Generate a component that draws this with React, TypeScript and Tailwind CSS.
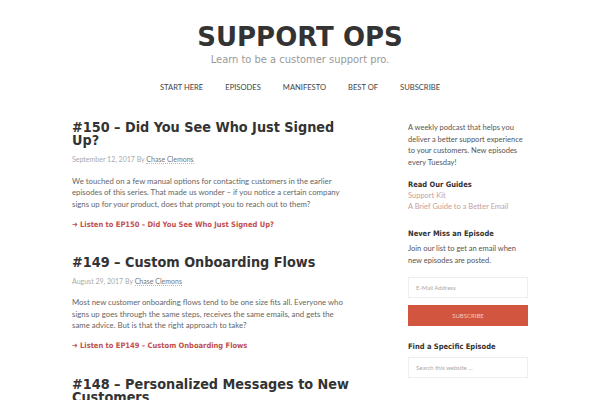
import React from 'react';

const posts = [
  {
    title: '#150 – Did You See Who Just Signed Up?',
    date: 'September 12, 2017',
    body: 'We touched on a few manual options for contacting customers in the earlier episodes of this series. That made us wonder – if you notice a certain company signs up for your product, does that prompt you to reach out to them?',
    link: 'Listen to EP150 – Did You See Who Just Signed Up?',
  },
  {
    title: '#149 – Custom Onboarding Flows',
    date: 'August 29, 2017',
    body: 'Most new customer onboarding flows tend to be one size fits all. Everyone who signs up goes through the same steps, receives the same emails, and gets the same advice. But is that the right approach to take?',
    link: 'Listen to EP149 – Custom Onboarding Flows',
  },
];

const nav = ['START HERE', 'EPISODES', 'MANIFESTO', 'BEST OF', 'SUBSCRIBE'];

const heading = { fontFamily: '"DejaVu Sans", sans-serif' };
const cond = { fontFamily: '"DejaVu Sans Condensed", "DejaVu Sans", sans-serif' };
const body = { fontFamily: 'Lato, "Liberation Sans", sans-serif' };

function Post({ p, first }: { p: (typeof posts)[number]; first?: boolean }) {
  return (
    <article className={first ? '' : 'mt-[26px]'}>
      <h2 className="w-[272px] text-[14.3px] leading-[13px] font-bold text-[#333]" style={cond}>
        {p.title}
      </h2>
      <div className="text-[7px] leading-[10px] text-[#aaa] mt-[7px]">
        {p.date} By{' '}
        <span className="text-[#777] border-b border-dotted border-[#bbb]">Chase Clemons</span>
      </div>
      <p className="w-[272px] text-[7.8px] leading-[11.5px] text-[#666] mt-[11.5px]">{p.body}</p>
      <a className="block text-[7.5px] leading-[10px] font-bold text-[#c0504d] mt-[9.5px]" style={cond}>
        ➜ {p.link}
      </a>
    </article>
  );
}

export default function App() {
  return (
    <div className="w-[600px] h-[400px] overflow-hidden bg-white" style={body}>
      {/* Header */}
      <header className="flex flex-col items-center pt-[21px]">
        <h1 className="text-[26px] leading-[32px] font-bold text-[#333]" style={heading}>
          SUPPORT OPS
        </h1>
        <p className="text-[11px] leading-[14px] text-[#999]" style={cond}>
          Learn to be a customer support pro.
        </p>
        <nav className="flex gap-[22px] mt-[15px] text-[7.6px] text-[#444]">
          {nav.map((n) => (
            <span key={n}>{n}</span>
          ))}
        </nav>
      </header>

      <div className="flex gap-[56px] pl-[72px] mt-[28px]">
        {/* Main */}
        <main className="w-[280px] flex flex-col">
          {posts.map((p, i) => (
            <Post key={p.title} p={p} first={i === 0} />
          ))}
          <h2 className="mt-[27px] text-[14.3px] leading-[13px] font-bold text-[#333]" style={cond}>
            #148 – Personalized Messages to New Customers
          </h2>
        </main>

        {/* Sidebar */}
        <aside className="w-[120px] text-[7.5px] leading-[11.4px] text-[#555] pt-[1px]">
          <p>A weekly podcast that helps you deliver a better support experience to your customers. New episodes every Tuesday!</p>
          <h3 className="font-bold text-[#333] mt-[10.5px] text-[7.5px]" style={cond}>Read Our Guides</h3>
          <div className="text-[#c9a099]">Support Kit</div>
          <div className="text-[#c9a099]">A Brief Guide to a Better Email</div>
          <h3 className="font-bold text-[#333] mt-[15px] text-[7.5px]" style={cond}>Never Miss an Episode</h3>
          <p className="mt-[4px]">Join our list to get an email when new episodes are posted.</p>
          <div className="mt-[11px] h-[21px] border border-[#eee] flex items-center px-[7px] text-[6px] text-[#aaa]">
            E-Mail Address
          </div>
          <div className="mt-[7px] h-[21px] bg-[#d25540] flex items-center justify-center text-[6px] text-[#f3c8bd]">
            SUBSCRIBE
          </div>
          <h3 className="font-bold text-[#333] mt-[15px] text-[7.5px]" style={cond}>Find a Specific Episode</h3>
          <div className="mt-[5px] h-[21px] border border-[#eee] flex items-center px-[7px] text-[6px] text-[#aaa]">
            Search this website …
          </div>
        </aside>
      </div>
    </div>
  );
}
